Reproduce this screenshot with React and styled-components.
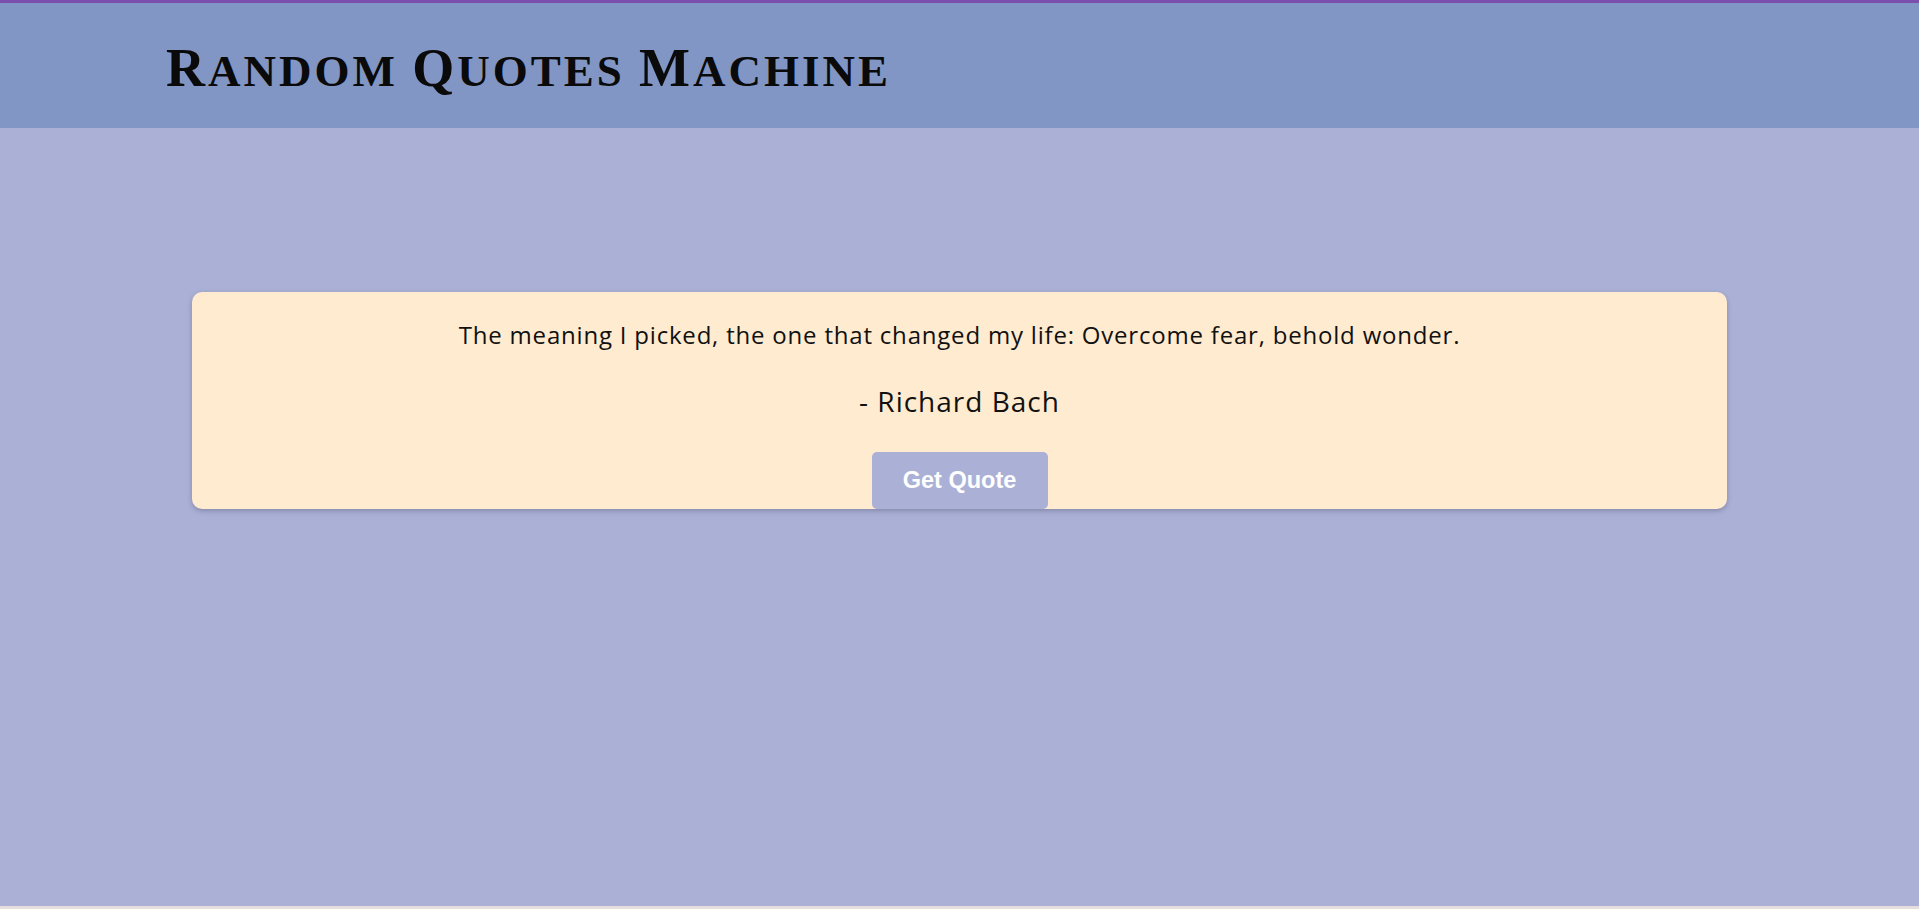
import React from "react";
import styled, { createGlobalStyle } from "styled-components";

const Global = createGlobalStyle`
  html, body { margin: 0; padding: 0; background: #e6dede; }
  body { font-family: "Open Sans", sans-serif; }
`;

const Page = styled.div`
  height: 906px;
  background: #abb1d6;
  display: flex;
  flex-direction: column;
`;

const Header = styled.header`
  height: 125px;
  border-top: 3px solid #7a4fae;
  background: #8196c5;
  display: flex;
  align-items: center;
  padding-left: 166px;
`;

const Title = styled.h1`
  margin: 0;
  font-family: "Liberation Serif", serif;
  font-weight: 700;
  color: #0a0a0a;
  text-transform: uppercase;
  font-size: 45px;
  letter-spacing: 3px;
  line-height: 1;
  padding-top: 4px;
`;

const Big = styled.span`
  font-size: 54px;
`;

const Main = styled.main`
  display: flex;
  justify-content: center;
  padding-top: 164px;
`;

const Card = styled.section`
  width: 80%;
  background: #ffebcf;
  border-radius: 10px;
  box-shadow: 0 2px 5px rgba(60, 60, 90, 0.35);
  display: flex;
  flex-direction: column;
  align-items: center;
  padding-top: 26px;
`;

const Quote = styled.p`
  margin: 0;
  font-family: "Open Sans", sans-serif;
  font-size: 24px;
  letter-spacing: 0.8px;
  line-height: 34px;
  color: #111;
`;

const Author = styled.p`
  margin: 30px 0 0 0;
  font-family: "Open Sans", sans-serif;
  font-size: 28px;
  letter-spacing: 1px;
  line-height: 38px;
  color: #111;
`;

const Button = styled.button`
  margin-top: 32px;
  width: 176px;
  height: 57px;
  border: none;
  border-radius: 5px;
  background: #abb1d6;
  color: #fff;
  font-family: "Liberation Sans", Arial, sans-serif;
  font-weight: 700;
  font-size: 23.5px;
  cursor: pointer;
`;

export default function App() {
  return (
    <>
      <Global />
      <Page>
        <Header>
          <Title>
            <Big>R</Big>andom <Big>Q</Big>uotes <Big>M</Big>achine
          </Title>
        </Header>
        <Main>
          <Card>
            <Quote>
              The meaning I picked, the one that changed my life: Overcome fear, behold wonder.
            </Quote>
            <Author>- Richard Bach</Author>
            <Button>Get Quote</Button>
          </Card>
        </Main>
      </Page>
    </>
  );
}
